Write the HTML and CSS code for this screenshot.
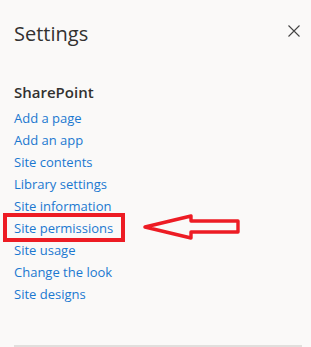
FILE: index.html
```html
<!DOCTYPE html>
<html lang="en">
<head>
<meta charset="utf-8">
<title>Settings</title>
<link rel="stylesheet" href="styles.css">
</head>
<body>
<div class="panel">
  <div class="header">
    <h1 class="title">Settings</h1>
    <button class="close" aria-label="Close">
      <svg width="12" height="12" viewBox="0 0 12 12"><path d="M0.5 0.5 L11.5 11.5 M11.5 0.5 L0.5 11.5" stroke="#444" stroke-width="1.1" fill="none"/></svg>
    </button>
  </div>
  <h2 class="section">SharePoint</h2>
  <ul class="links">
    <li><a href="#">Add a page</a></li>
    <li><a href="#">Add an app</a></li>
    <li><a href="#">Site contents</a></li>
    <li><a href="#">Library settings</a></li>
    <li><a href="#">Site information</a></li>
    <li class="marked"><a href="#">Site permissions</a>
      <span class="mark-box"></span>
      <svg class="mark-arrow" width="100" height="28" viewBox="0 0 100 28"><polygon points="3,13 49,2 49,7 96,7 96,18 49,18 49,24" fill="none" stroke="#ed1c24" stroke-width="3.4" stroke-linejoin="round"/></svg>
    </li>
    <li><a href="#">Site usage</a></li>
    <li><a href="#">Change the look</a></li>
    <li><a href="#">Site designs</a></li>
  </ul>
  <div class="divider"></div>
</div>
</body>
</html>
```
FILE: styles.css
```css
html, body {
  margin: 0;
  padding: 0;
  background: #faf9f8;
}
body {
  font-family: "Open Sans", "Noto Sans", sans-serif;
  color: #323130;
  overflow: hidden;
}
.panel {
  padding: 20px 9px 0 14px;
}
.header {
  display: flex;
  justify-content: space-between;
  align-items: flex-start;
}
.title {
  margin: 0;
  font-size: 20px;
  line-height: 28px;
  font-weight: 400;
  color: #323130;
}
.close {
  border: 0;
  background: none;
  padding: 0;
  margin: 5px 2px 0 0;
  width: 12px;
  height: 12px;
  display: block;
}
.close svg { display: block; }
.section {
  margin: 33px 0 4px;
  font-size: 15px;
  line-height: 22px;
  font-weight: 600;
  color: #323130;
}
.links {
  list-style: none;
  margin: 0;
  padding: 0;
}
.links li {
  font-size: 13px;
  line-height: 22px;
}
.links a {
  color: #1a78d0;
  text-decoration: none;
}
.marked {
  position: relative;
}
.mark-box {
  position: absolute;
  left: -11px;
  top: -4px;
  width: 122px;
  height: 29px;
  box-sizing: border-box;
  border: 4px solid #ed1c24;
}
.mark-arrow {
  position: absolute;
  left: 128px;
  top: -3px;
}
.divider {
  margin-top: 40px;
  height: 2px;
  background: #e1dfdd;
}
```
